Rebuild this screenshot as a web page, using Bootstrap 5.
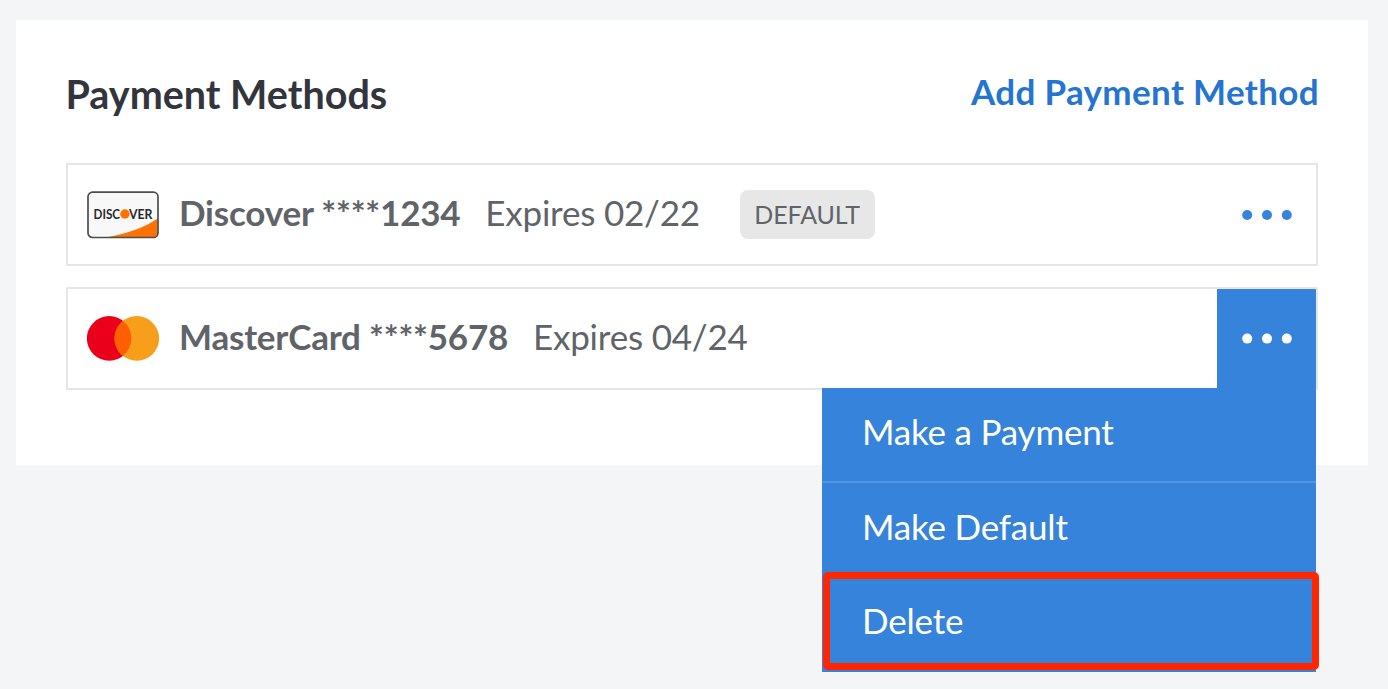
<!DOCTYPE html>
<html lang="en">
<head>
<meta charset="utf-8">
<meta name="viewport" content="width=device-width, initial-scale=1">
<title>Payment Methods</title>
<link href="https://cdn.jsdelivr.net/npm/bootstrap@5.3.0/dist/css/bootstrap.min.css" rel="stylesheet">
<style>
body { background: #f3f5f7; font-family: Lato, sans-serif; color: #606469; font-size: 35px; line-height: 44px; min-height: 689px; overflow: hidden; }
.panel { margin: 20px 20px 0 16px; height: 445px; padding: 50px 50px 0 50px; background: #fff; }
.panel-head { height: 93px; }
.panel-head h1 { font-size: 39.5px; line-height: 48px; color: #32363c; margin-left: -.5px !important; }
.add-link { color: #2575d0; line-height: 43px; letter-spacing: .35px; margin-right: -1px; }
.method { height: 103px; border: 2px solid #e6e6e6; padding-left: 19px; margin-bottom: 21px; letter-spacing: -.2px; }
.brand-icon { width: 72px; height: 48px; margin-right: 20px; flex: none; }
.label-text { padding-bottom: 5px; }
.expires { margin-left: 24.8px; }
.tag { margin-left: 39.7px; width: 135px; height: 49px; line-height: 49px; font-size: 25px; letter-spacing: -.1px; border-radius: 8px; background: #e7e7e7; }
.more { width: 99px; height: 99px; color: #3683dc; }
.more.show { background: #3683dc; color: #fff; }
.actions { top: 99px; right: 0; width: 494px; height: 284px; background: #3683dc; z-index: 2; }
.actions a { height: 94px; padding: 0 0 8px 40px; color: #fff; }
.actions a:first-child { height: 95px; padding-bottom: 8px; border-bottom: 2px solid #5496e2; }
.callout-box { left: 1px; right: -3px; top: 184px; height: 98px; border: 7px solid #ff2600; border-radius: 5px; }
</style>
</head>
<body>
<main class="panel">
  <header class="panel-head d-flex justify-content-between align-items-start">
    <h1 class="fw-bold m-0 text-nowrap">Payment Methods</h1>
    <a href="#" class="add-link fw-bold text-decoration-none text-nowrap">Add Payment Method</a>
  </header>
  <section class="method d-flex align-items-center text-nowrap">
    <svg class="brand-icon" viewBox="0 0 72 48" role="img" aria-label="Discover">
      <rect x="1" y="1.2" width="70" height="45.3" rx="4.5" fill="#f8f8f8"/>
      <path d="M20 46.2C40 43 59 36 70.6 27.5V42a4.2 4.2 0 0 1-4.2 4.2Z" fill="#ff7100"/>
      <rect x="1" y="1.2" width="70" height="45.3" rx="4.5" fill="none" stroke="#4d4d4f" stroke-width="1.7"/>
      <g font-family="Lato, sans-serif" font-weight="700" font-size="13.2" letter-spacing="0" fill="#29292b">
        <text x="6.6" y="27.8" textLength="26.5" lengthAdjust="spacingAndGlyphs">DISC</text>
        <text x="42" y="27.8" textLength="23.5" lengthAdjust="spacingAndGlyphs">VER</text>
      </g>
      <circle cx="37.9" cy="23" r="4.7" fill="#ff7100"/>
    </svg>
    <span class="label-text fw-bold">Discover ****1234</span>
    <span class="label-text expires">Expires 02/22</span>
    <span class="tag text-center">DEFAULT</span>
    <div class="more ms-auto d-flex align-items-center justify-content-center">
      <svg width="52" height="12" viewBox="0 0 52 12" fill="currentColor"><circle cx="6.2" cy="6" r="5"/><circle cx="26" cy="6" r="5"/><circle cx="45.8" cy="6" r="5"/></svg>
    </div>
  </section>
  <section class="method d-flex align-items-center text-nowrap position-relative">
    <svg class="brand-icon" viewBox="0 0 72 48" role="img" aria-label="MasterCard">
      <circle cx="22.2" cy="23.4" r="22.3" fill="#eb001b"/>
      <circle cx="49.8" cy="23.4" r="22.3" fill="#f79e1b"/>
      <path d="M36 5.9a22.3 22.3 0 0 1 0 35a22.3 22.3 0 0 1 0-35Z" fill="#ff5f00"/>
    </svg>
    <span class="label-text fw-bold">MasterCard ****5678</span>
    <span class="label-text expires">Expires 04/24</span>
    <div class="more show ms-auto d-flex align-items-center justify-content-center">
      <svg width="52" height="12" viewBox="0 0 52 12" fill="currentColor"><circle cx="6.2" cy="5.6" r="5"/><circle cx="26" cy="5.6" r="5"/><circle cx="45.8" cy="5.6" r="5"/></svg>
    </div>
    <nav class="actions position-absolute d-flex flex-column">
      <a href="#" class="d-flex align-items-center text-decoration-none">Make a Payment</a>
      <a href="#" class="d-flex align-items-center text-decoration-none">Make Default</a>
      <a href="#" class="d-flex align-items-center text-decoration-none">Delete</a>
      <div class="callout-box position-absolute pe-none"></div>
    </nav>
  </section>
</main>
<script src="https://cdn.jsdelivr.net/npm/bootstrap@5.3.0/dist/js/bootstrap.bundle.min.js"></script>
</body>
</html>
